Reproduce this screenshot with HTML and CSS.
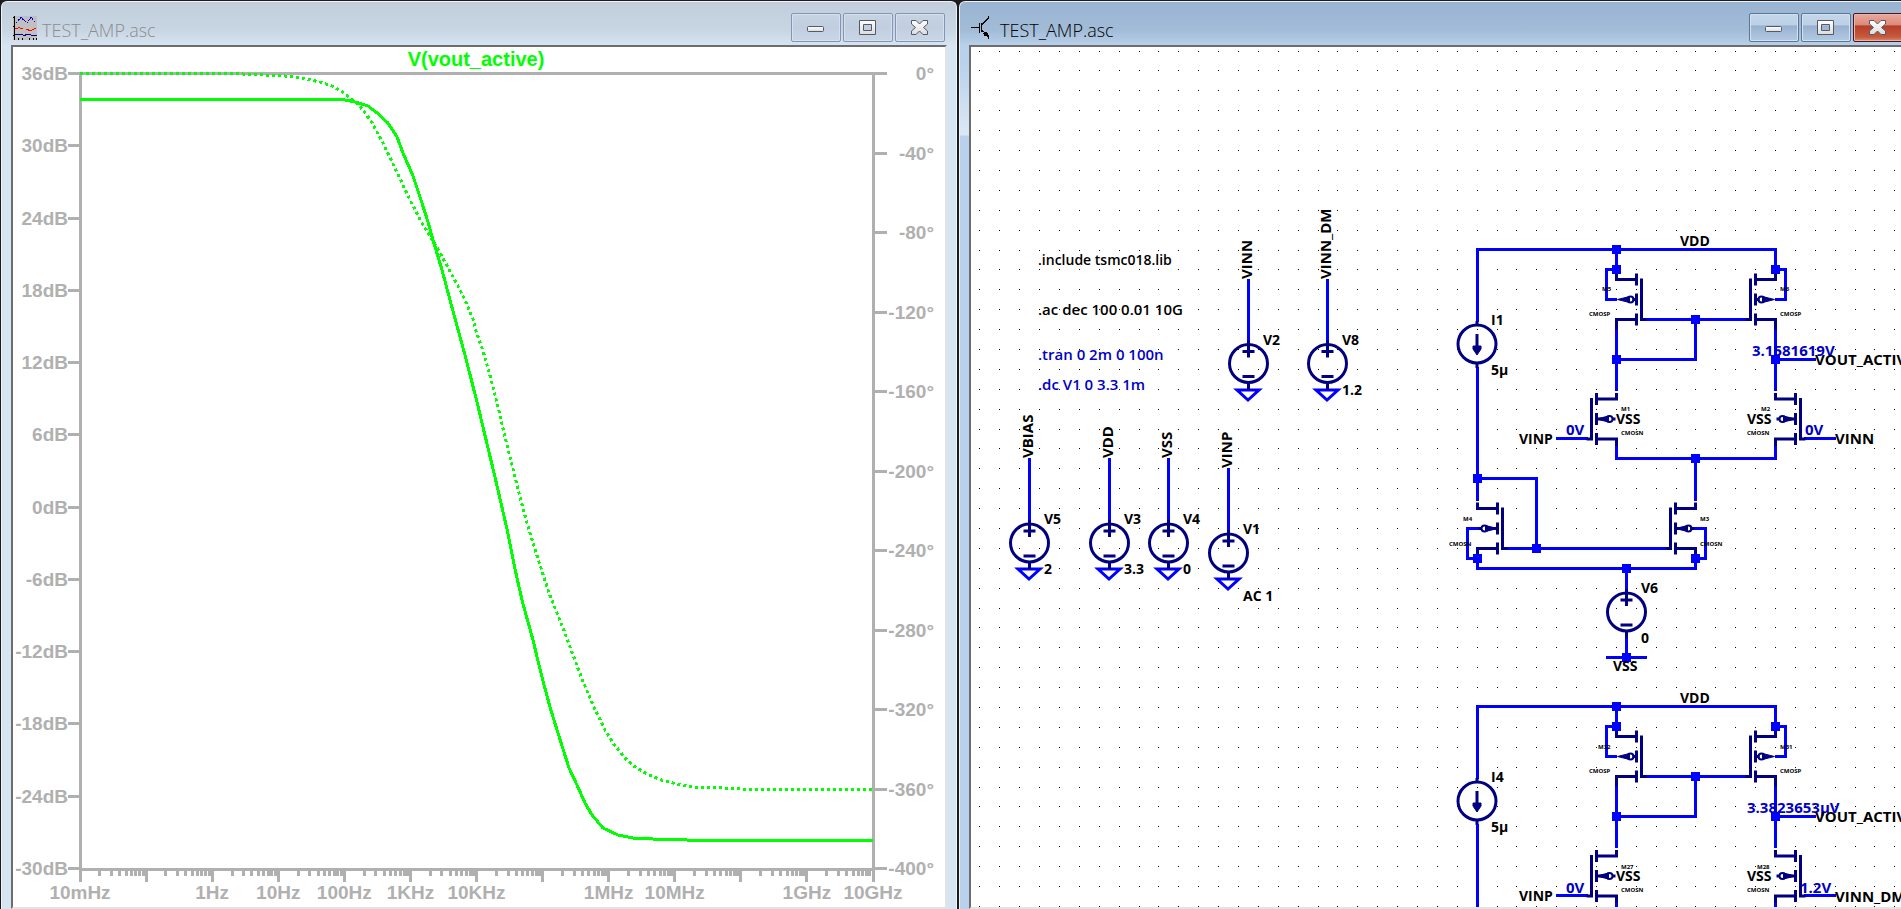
FILE: index.html
```
<!DOCTYPE html>
<html lang="en">
<head>
    <meta charset="UTF-8">
    <meta name="viewport" content="width=device-width, initial-scale=1.0">
    <title>TEST_AMP.asc</title>
    <link rel="stylesheet" href="styles.css">
</head>
<body>
    <!-- Icons and circuit parts used more than once -->
    <svg class="defs" aria-hidden="true">
        <defs>
            <linearGradient id="glyph" x1="0" y1="0" x2="0" y2="1">
                <stop offset="0" stop-color="#ffffff"/>
                <stop offset="1" stop-color="#dcdcdc"/>
            </linearGradient>
            <symbol id="icon-min" viewBox="0 0 20 18">
                <rect x="1.5" y="7.5" width="16" height="5" rx="1" fill="url(#glyph)" stroke="#53596b"/>
            </symbol>
            <symbol id="icon-max" viewBox="0 0 20 18">
                <path d="M1.500 1.500h16v14h-16z M5.500 5.500v6h8v-6z" fill="url(#glyph)" fill-rule="evenodd" stroke="#53596b" stroke-linejoin="round"/>
            </symbol>
            <symbol id="icon-close" viewBox="0 0 20 18">
                <path d="M1.500 1.500h4.500l3.500 3.500 3.500-3.500h4.500v3.500l-4 3.500 4 3.500v3.500h-4.500l-3.500-3.500-3.500 3.500h-4.500v-3.500l4-3.500-4-3.500z" fill="url(#glyph)" stroke="#53596b" stroke-linejoin="round"/>
            </symbol>

            <!-- MOSFET, gate on the right -->
            <g id="mos">
                <path d="M0 4V10H20 M20 4V16 M20 24V36 M20 44V56 M20 50H0V60 M25 9V50H30"/>
            </g>
            <g id="pmos">
                <use href="#mos"/>
                <path class="solid" d="M1 30L13 27V33Z"/>
                <circle class="ring" cx="14" cy="30" r="3"/>
                <path d="M16 30H20"/>
            </g>
            <g id="nmos">
                <use href="#mos"/>
                <path d="M1 30H4"/>
                <circle class="ring" cx="7" cy="30" r="3"/>
                <path class="solid" d="M20 30L8 27V33Z"/>
                <path d="M10 30H20"/>
            </g>

            <g id="vsource">
                <circle cx="0" cy="0" r="19"/>
                <path d="M0 -23V-6 M-6 -12H6 M-6 13H6 M0 19V26"/>
            </g>
            <path id="ground" d="M-11 27H11L0 37Z"/>
            <g id="isource">
                <circle cx="0" cy="0" r="19"/>
                <path d="M0 -23V-19 M0 -10V8 M0 19V24"/>
                <path class="solid" d="M-4 2H4V5L0 11L-4 5Z"/>
            </g>
            <rect id="node" x="-4.500" y="-4.500" width="9" height="9"/>

            <!-- Load and input pair shared by both amplifiers -->
            <g id="amp">
                <path class="wire" d="M1477.500 322V249.500H1775.500V274 M1616.500 249.500V274 M1616.500 269.500H1606.500V299.500H1617 M1775.500 269.500H1785.500V299.500H1775
                    M1646 319.500H1746 M1695.500 319.500V359.500H1616.500 M1616.500 329V391 M1775.500 329V391 M1775.500 359.500H1816
                    M1556 438.500H1588 M1804 438.500H1836 M1477.500 367V478"/>
                <g class="part">
                    <use href="#isource" x="1477" y="344"/>
                    <use href="#pmos" x="1616.500" y="269.500"/>
                    <use href="#pmos" transform="translate(1775.500 269.500) scale(-1 1)"/>
                    <use href="#nmos" transform="translate(1616.500 389) scale(-1 1)"/>
                    <use href="#nmos" x="1775.500" y="389"/>
                </g>
                <path class="wire" d="M1616.500 446V458.500H1775.500V446"/>
                <g class="node">
                    <use href="#node" x="1616.500" y="249.500"/>
                    <use href="#node" x="1616.500" y="269.500"/>
                    <use href="#node" x="1775.500" y="269.500"/>
                    <use href="#node" x="1695.500" y="319.500"/>
                    <use href="#node" x="1616.500" y="359.500"/>
                    <use href="#node" x="1775.500" y="359.500"/>
                </g>
                <text x="1680" y="246">VDD</text>
                <text x="1491" y="375">5µ</text>
                <text x="1616" y="424">VSS</text>
                <text x="1747" y="424">VSS</text>
                <text x="1519" y="444">VINP</text>
                <text class="tiny" x="1589" y="316">CMOSP</text>
                <text class="tiny" x="1780" y="316">CMOSP</text>
                <text class="tiny" x="1621" y="435">CMOSN</text>
                <text class="tiny" x="1747" y="435">CMOSN</text>
            </g>
        </defs>
    </svg>

    <main class="desktop">
        <section class="window window-plot">
            <header class="titlebar">
                <svg class="app-icon" viewBox="0 0 24 24" aria-hidden="true">
                    <rect width="24" height="24" fill="#c0c0c0"/>
                    <path d="M1.500 0V24" stroke="#000" stroke-width="1"/>
                    <path d="M0 1.500H2 M0 10.500H2 M0 19.500H2 M5.500 22V24 M9.500 22V24 M16.500 22V24 M20.500 22V24 M23.500 22V24" stroke="#000"/>
                    <path d="M3 7L8 1.500L14 7L18 1.500L23 7" fill="none" stroke="#0000e0" stroke-dasharray="2 1"/>
                    <path d="M2 13L6 11.500L10 13 M13 13.500L18 14.500L23 12" fill="none" stroke="#f00" stroke-width="1"/>
                    <path d="M2 18.500H9L11 19.500L14 18.500H17L19 19.500H24" fill="none" stroke="#000090" stroke-width="1"/>
                </svg>
                <h1 class="title">TEST_AMP.asc</h1>
                <div class="controls">
                    <button type="button" aria-label="Minimize"><svg><use href="#icon-min"/></svg></button>
                    <button type="button" aria-label="Maximize"><svg><use href="#icon-max"/></svg></button>
                    <button type="button" aria-label="Close"><svg><use href="#icon-close"/></svg></button>
                </div>
            </header>

            <div class="pane plot">
                <h2 class="trace-name">V(vout_active)</h2>

                <ul class="axis axis-left">
                    <li>36dB</li>
                    <li>30dB</li>
                    <li>24dB</li>
                    <li>18dB</li>
                    <li>12dB</li>
                    <li>6dB</li>
                    <li>0dB</li>
                    <li>-6dB</li>
                    <li>-12dB</li>
                    <li>-18dB</li>
                    <li>-24dB</li>
                    <li>-30dB</li>
                </ul>

                <svg class="curves" viewBox="80 73 793 796" preserveAspectRatio="none">
                    <rect class="frame" x="80" y="73" width="793" height="796"/>
                    <polyline class="phase" points="80,73 236,73 243,74 285,76 302,78 320,82 332,86 344,93 359,105 371,121 382,141 395,168 410,200 423,225 438,249 445,262 458,286 465,300 473,319 476,331 483,351 491,379 499,411 504,433 513,469 521,501 529,530 539,562 549,593 563,628 573,655 582,679 593,705 605,730 613,743 626,759 635,767 647,774 664,781 677,784 693,787 725,788 742,789 873,789"/>
                    <polyline class="gain" points="80,99 329,99 345,100 355,102 368,106 376,112 388,123 397,137 403,153 413,176 421,200 428,222 433,240 442,270 450,300 465,355 477,402 488,448 495,477 501,503 507,529 511,549 515,569 519,587 523,604 528,622 533,640 538,661 543,681 550,707 558,733 569,768 577,785 585,803 592,815 603,828 618,835 633,838 653,839 687,840 873,840"/>
                </svg>

                <ul class="axis axis-right">
                    <li>0°</li>
                    <li>-40°</li>
                    <li>-80°</li>
                    <li>-120°</li>
                    <li>-160°</li>
                    <li>-200°</li>
                    <li>-240°</li>
                    <li>-280°</li>
                    <li>-320°</li>
                    <li>-360°</li>
                    <li>-400°</li>
                </ul>

                <div class="axis-bottom">
                    <svg class="ticks" id="ticks"></svg>
                    <ul class="freq">
                        <li>10mHz</li>
                        <li></li>
                        <li>1Hz</li>
                        <li>10Hz</li>
                        <li>100Hz</li>
                        <li>1KHz</li>
                        <li>10KHz</li>
                        <li></li>
                        <li>1MHz</li>
                        <li>10MHz</li>
                        <li></li>
                        <li>1GHz</li>
                        <li>10GHz</li>
                    </ul>
                </div>
            </div>
        </section>

        <section class="window window-schematic active">
            <header class="titlebar">
                <svg class="app-icon" viewBox="0 0 24 24" aria-hidden="true">
                    <path d="M0 11.500H8 M8.500 7V17 M10.500 7V16 M11 8.500L17.500 2V0 M11 14.500L17.500 20V23" fill="none" stroke="#000"/>
                    <path d="M12 17L16 15.500L18 21L13 19.500Z"/>
                </svg>
                <h1 class="title">TEST_AMP.asc</h1>
                <div class="controls">
                    <button type="button" aria-label="Minimize"><svg><use href="#icon-min"/></svg></button>
                    <button type="button" aria-label="Maximize"><svg><use href="#icon-max"/></svg></button>
                    <button type="button" class="close" aria-label="Close"><svg><use href="#icon-close"/></svg></button>
                </div>
            </header>

            <div class="pane">
                <svg class="schematic">
                    <g transform="translate(-971 -47)">
                        <path id="grid" class="grid"/>

                        <!-- Sources -->
                        <path class="wire" d="M1248.500 279V341 M1327.500 279V341 M1029.500 458V520 M1109.500 458V520 M1168.500 458V520 M1228.500 468V530"/>
                        <g class="wire">
                            <use href="#ground" x="1248" y="363"/>
                            <use href="#ground" x="1327" y="363"/>
                            <use href="#ground" x="1029" y="542"/>
                            <use href="#ground" x="1109" y="542"/>
                            <use href="#ground" x="1168" y="542"/>
                            <use href="#ground" x="1228" y="552"/>
                        </g>
                        <g class="part">
                            <use href="#vsource" x="1248.500" y="363.500"/>
                            <use href="#vsource" x="1327.500" y="363.500"/>
                            <use href="#vsource" x="1029.500" y="543"/>
                            <use href="#vsource" x="1109.500" y="543"/>
                            <use href="#vsource" x="1168.500" y="543"/>
                            <use href="#vsource" x="1228.500" y="553"/>
                        </g>
                        <g class="net">
                            <text transform="translate(1252 279) rotate(-90)">VINN</text>
                            <text transform="translate(1331 279) rotate(-90)">VINN_DM</text>
                            <text transform="translate(1033 458) rotate(-90)">VBIAS</text>
                            <text transform="translate(1113 458) rotate(-90)">VDD</text>
                            <text transform="translate(1172 458) rotate(-90)">VSS</text>
                            <text transform="translate(1232 468) rotate(-90)">VINP</text>
                        </g>
                        <text x="1263" y="345">V2</text>
                        <text x="1342" y="345">V8</text>
                        <text x="1342" y="395">1.2</text>
                        <text x="1044" y="524">V5</text>
                        <text x="1044" y="574">2</text>
                        <text x="1124" y="524">V3</text>
                        <text x="1124" y="574">3.3</text>
                        <text x="1183" y="524">V4</text>
                        <text x="1183" y="574">0</text>
                        <text x="1243" y="534">V1</text>
                        <text x="1243" y="601">AC 1</text>

                        <!-- Directives -->
                        <text class="include" x="1038" y="265">.include tsmc018.lib</text>
                        <text class="spice" x="1038" y="315">.ac dec 100 0.01 10G</text>
                        <text class="spice off" x="1038" y="360">.tran 0 2m 0 100n</text>
                        <text class="spice off" x="1038" y="390">.dc V1 0 3.3 1m</text>

                        <!-- First amplifier -->
                        <use href="#amp"/>
                        <text x="1491" y="325">I1</text>
                        <text class="tiny" x="1602" y="291">M5</text>
                        <text class="tiny" x="1780" y="291">M6</text>
                        <text class="tiny" x="1621" y="411">M1</text>
                        <text class="tiny" x="1761" y="411">M2</text>
                        <text class="value" x="1752" y="356">3.1581619V</text>
                        <text class="value" x="1566" y="435">0V</text>
                        <text class="value" x="1805" y="435">0V</text>
                        <text class="net" x="1815" y="365">VOUT_ACTIVE</text>
                        <text class="net" x="1835" y="444">VINN</text>

                        <!-- Tail mirror -->
                        <path class="wire" d="M1695.500 458.500V501 M1477.500 478V501 M1477.500 478.500H1536.500V548.500 M1506 548.500H1669
                            M1482 528.500H1467.500V558.500H1477.500 M1477.500 557V568.500H1695.500V557 M1690 528.500H1705.500V558.500H1695.500
                            M1626.500 568.500V590 M1626.500 636V657.500 M1606 657.500H1647"/>
                        <g class="part">
                            <use href="#nmos" x="1477.500" y="498.500"/>
                            <use href="#nmos" transform="translate(1695.500 498.500) scale(-1 1)"/>
                            <use href="#vsource" x="1626.500" y="612"/>
                        </g>
                        <g class="node">
                            <use href="#node" x="1695.500" y="458.500"/>
                            <use href="#node" x="1477.500" y="478.500"/>
                            <use href="#node" x="1536.500" y="548.500"/>
                            <use href="#node" x="1477.500" y="558.500"/>
                            <use href="#node" x="1695.500" y="558.500"/>
                            <use href="#node" x="1626.500" y="568.500"/>
                            <use href="#node" x="1626.500" y="657.500"/>
                        </g>
                        <text class="tiny" x="1463" y="521">M4</text>
                        <text class="tiny" x="1449" y="546">CMOSN</text>
                        <text class="tiny" x="1700" y="521">M3</text>
                        <text class="tiny" x="1700" y="546">CMOSN</text>
                        <text x="1641" y="593">V6</text>
                        <text x="1641" y="643">0</text>
                        <text x="1613" y="671">VSS</text>

                        <!-- Second amplifier -->
                        <g transform="translate(0 457)">
                            <use href="#amp"/>
                            <path class="wire" d="M1477.500 367V520"/>
                            <text x="1491" y="325">I4</text>
                            <text class="tiny" x="1598" y="292">M32</text>
                            <text class="tiny" x="1780" y="292">M31</text>
                            <text class="tiny" x="1621" y="412">M27</text>
                            <text class="tiny" x="1757" y="412">M28</text>
                            <text class="value" x="1747" y="356">3.3823653µV</text>
                            <text class="value" x="1566" y="436">0V</text>
                            <text class="value" x="1800" y="436">1.2V</text>
                            <text class="net" x="1815" y="365">VOUT_ACTIVE</text>
                            <text class="net" x="1835" y="445">VINN_DM</text>
                        </g>
                    </g>
                </svg>
            </div>
        </section>
    </main>

    <script>
        // Logarithmic ticks, 10mHz to 10GHz
        const decades = 12;
        const ticks = document.getElementById('ticks');

        function addTick(pos, length) {
            const line = document.createElementNS('http://www.w3.org/2000/svg', 'line');
            const x = (pos / decades * 100) + '%';
            line.setAttribute('x1', x);
            line.setAttribute('x2', x);
            line.setAttribute('y1', 0);
            line.setAttribute('y2', length);
            ticks.appendChild(line);
        }

        for (let d = 0; d <= decades; d++) {
            addTick(d, 13);
            for (let n = 2; n < 10 && d < decades; n++) {
                addTick(d + Math.log10(n), 7);
            }
        }

        // Grid dots on the schematic sheet
        const step = 19.89;
        let dots = '';
        for (let row = 0; row < 80; row++) {
            for (let col = 0; col < 120; col++) {
                dots += 'M' + Math.floor(979.9 + col * step) + ' ' + Math.floor(51.1 + row * step) + 'h1v1h-1z';
            }
        }
        document.getElementById('grid').setAttribute('d', dots);
    </script>
</body>
</html>
```

FILE: styles.css
```
* {
    box-sizing: border-box;
    margin: 0;
    padding: 0;
}

body {
    background-color: #1c1c20;
    overflow: hidden;
}

ul {
    list-style: none;
}

.defs {
    position: absolute;
    width: 0;
    height: 0;
}

.desktop {
    display: grid;
    grid-template-columns: 956fr 942fr;
    grid-template-rows: minmax(0, 1fr);
    gap: 2px;
    height: 100vh;
    padding: 1px 0 0 1px;
}

/* Windows */
.window {
    display: flex;
    flex-direction: column;
    min-width: 0;
    padding: 0 9px;
    border: 1px solid #eef3f9;
    border-bottom: none;
    border-radius: 6px 6px 0 0;
    background: linear-gradient(#c1cddb, #c8d6e4 28px, #d7e4f2 44px);
}

.window.active {
    background: linear-gradient(#99b4d1, #a2bcd8 28px, #b9d1ea 44px, #b9d1ea 60px, #dce8f5 133px, #b9d1ea 134px);
}

/* the schematic window runs past the right edge of the screen */
.window-schematic {
    margin-right: -14px;
}

.titlebar {
    display: flex;
    align-items: center;
    gap: 5px;
    height: 43px;
    padding: 11px 2px 3px;
}

.app-icon {
    width: 24px;
    height: 24px;
    shape-rendering: crispEdges;
}

.title {
    flex: 1;
    padding-top: 4px;
    font-family: "Open Sans", "Noto Sans", sans-serif;
    font-size: 18px;
    font-weight: 300;
    line-height: 24px;
    color: #8c8c8c;
}

.active .title {
    color: #000;
}

.controls {
    display: flex;
    gap: 2px;
}

.controls button {
    display: flex;
    align-items: center;
    justify-content: center;
    width: 50px;
    height: 29px;
    border: 1px solid #8494b4;
    border-radius: 2px;
    background: linear-gradient(#c6d3e2, #c0cee0 50%, #c8d6e6);
    box-shadow: inset 0 0 0 1px #d6e1ed;
}

.controls svg {
    width: 20px;
    height: 18px;
}

.active .controls button {
    border-color: #5f7593;
    background: linear-gradient(#c3d6ea, #bcd0e6 42%, #98b0ce 43%, #b2cbe4);
    box-shadow: inset 0 0 0 1px #d3e2f1;
}

.active .controls .close {
    border-color: #4a1420;
    background: linear-gradient(#e9a99b, #dd8878 42%, #b53d28 43%, #c65a3c 85%, #d98b72);
    box-shadow: inset 0 0 0 1px #e9b5a8;
}

.pane {
    flex: 1;
    min-height: 0;
    border: 2px solid #e3e3e3;
    border-top-color: #6d6d70;
    border-left-color: #6d6d70;
    background-color: white;
    overflow: hidden;
}

/* Plot */
.plot {
    display: grid;
    grid-template-columns: 67px minmax(0, 1fr) 72px;
    grid-template-rows: 26px minmax(0, 1fr) 38px;
    font-family: "Liberation Sans", Arial, sans-serif;
    font-size: 19px;
    font-weight: bold;
    line-height: 21px;
    color: #b0b0b0;
}

.trace-name {
    grid-column: 1 / -1;
    padding: 2px 6px 0 0;
    font-size: 20px;
    text-align: center;
    color: #00ff00;
}

.axis {
    display: flex;
    flex-direction: column;
    justify-content: space-between;
    margin: -10px 0;
}

.axis li {
    display: flex;
    align-items: center;
    justify-content: flex-end;
    height: 21px;
}

.axis-left li::after,
.axis-right li::before {
    content: "";
    flex: none;
    width: 12px;
    height: 3px;
    background-color: #b0b0b0;
}

.axis-right {
    padding: 0 11px 0 2px;
}

.axis-right li {
    justify-content: space-between;
}

.curves {
    width: 100%;
    height: 100%;
    overflow: visible;
    fill: none;
    stroke-width: 3px;
    shape-rendering: crispEdges;
}

.curves * {
    vector-effect: non-scaling-stroke;
}

.frame {
    stroke: #b0b0b0;
}

.gain {
    stroke: #00ff00;
}

.phase {
    stroke: #00ff00;
    stroke-dasharray: 3 3;
}

.axis-bottom {
    grid-column: 2;
}

.ticks {
    display: block;
    width: 100%;
    height: 13px;
    overflow: visible;
    stroke: #b0b0b0;
    stroke-width: 3px;
    shape-rendering: crispEdges;
}

/* 13 labels, each centred on its decade */
.freq {
    display: flex;
    justify-content: space-between;
}

.freq li {
    display: flex;
    justify-content: center;
    width: 0;
}

/* Schematic */
.schematic {
    display: block;
    width: 100%;
    height: 100%;
    font-family: "Open Sans", "Noto Sans", sans-serif;
    font-size: 14px;
    font-weight: bold;
}

.grid {
    fill: #000;
    shape-rendering: crispEdges;
}

.wire,
.part {
    fill: none;
    stroke: #0000ff;
    stroke-width: 3px;
}

.part {
    stroke: #000080;
}

.solid {
    fill: #000080;
    stroke-width: 1px;
}

.ring {
    stroke-width: 2px;
}

.node {
    fill: #0000ff;
}

.net,
.value,
.spice {
    font-size: 15px;
}

.value,
.off {
    fill: #0000c8;
}

.spice,
.include {
    font-weight: 600;
}

.tiny {
    font-size: 6px;
}
```
